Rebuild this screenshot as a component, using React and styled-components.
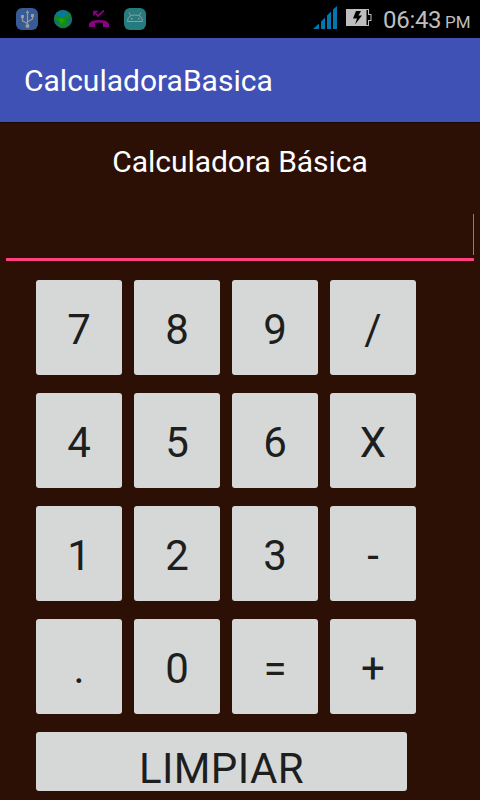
import React from 'react';
import styled, { createGlobalStyle } from 'styled-components';

const GlobalStyle = createGlobalStyle`
  * { box-sizing: border-box; }
  body { margin: 0; background: #2c1005; font-family: Roboto, sans-serif; }
`;

const Screen = styled.div`
  width: 480px;
  height: 800px;
  overflow: hidden;
  display: flex;
  flex-direction: column;
  background: #2c1005;
`;

const StatusBar = styled.header`
  height: 38px;
  flex: none;
  display: flex;
  align-items: center;
  justify-content: space-between;
  padding: 0 9px 0 16px;
  background: #000;
`;

const Notifications = styled.div`
  display: flex;
  align-items: center;
  gap: 15px;
`;

const SystemStatus = styled.div`
  display: flex;
  align-items: flex-start;
  height: 38px;
`;

const Icon = styled.svg`
  display: block;
  flex: none;
  margin-top: ${(p) => p.$top || 0}px;
  margin-right: ${(p) => p.$gap || 0}px;
`;

const Clock = styled.div`
  display: flex;
  align-items: baseline;
  gap: 4px;
  line-height: 38px;
  padding-top: 1px;
  color: #bebebe;
`;

const Time = styled.span`
  width: 58px;
  font-size: 24px;
  letter-spacing: -0.3px;
  white-space: nowrap;
`;

const Meridiem = styled.span`
  width: 26px;
  font-size: 17px;
  white-space: nowrap;
`;

const AppBar = styled.div`
  height: 84px;
  flex: none;
  display: flex;
  align-items: center;
  padding: 0 24px;
  background: #3f51b5;
  color: #fff;
  font-size: 30px;
`;

const Content = styled.main`
  display: flex;
  flex-direction: column;
  box-shadow: inset 0 1px 0 #1b0a03;
`;

const Heading = styled.h1`
  margin: 22px 0 0;
  font-size: 30px;
  font-weight: 400;
  line-height: 36px;
  text-align: center;
  letter-spacing: -0.04px;
  color: #fff;
`;

const Display = styled.div`
  height: 47px;
  margin: 34px 6px 19px;
  display: flex;
  justify-content: flex-end;
  border-bottom: 3px solid #ff4081;
`;

const Caret = styled.span`
  width: 1px;
  height: 41px;
  background: #ff4081;
`;

const Keypad = styled.div`
  display: grid;
  grid-template-columns: repeat(4, 86px);
  grid-auto-rows: 95px;
  gap: 18px 12px;
  padding-left: 36px;
`;

const Key = styled.button`
  border: 0;
  padding: 4px 0 0;
  border-radius: 3px;
  background: #d6d8d7;
  color: #1d1e1e;
  font-family: inherit;
  font-size: 42px;
  line-height: 50px;
`;

const ClearKey = styled(Key)`
  width: 371px;
  height: 59px;
  margin: 18px 0 0 36px;
  padding: 12px 0 0;
  letter-spacing: 0.4px;
`;

const keys = ['7', '8', '9', '/', '4', '5', '6', 'X', '1', '2', '3', '-', '.', '0', '=', '+'];

function UsbIcon() {
  return (
    <Icon width="22" height="22" viewBox="0 0 22 22">
      <rect width="22" height="22" rx="6" fill="#365b95" />
      <path d="M11.5 4V18M11.5 15.5L6.5 13V8M11.5 14L16.5 11V7" stroke="#9c9c9c" strokeWidth="1.2" fill="none" />
      <path d="M11.5 2L13.2 5H9.8ZM5 7H8V10H5ZM15 6H18V9H15Z" fill="#9c9c9c" />
      <circle cx="11.5" cy="18" r="2" fill="#9c9c9c" />
    </Icon>
  );
}

function GlobeIcon() {
  return (
    <Icon width="20" height="20" viewBox="0 0 20 20" $gap={1}>
      <circle cx="10" cy="10" r="9.2" fill="#176f70" />
      <path d="M4 3L11 2L15 4L11 9L6 8L3 6Z" fill="#08799a" />
      <path d="M1.5 6L6 8L9 9L17 4L18 7L13 10L16 16L10 18L4 16L7 13L2 11Z" fill="#148c1a" />
      <path d="M5 10L9 9L12 12L8 15Z" fill="#22a000" />
    </Icon>
  );
}

function MissedCallIcon() {
  return (
    <Icon width="20" height="18" viewBox="0 0 20 18">
      <path d="M5 1.5L9 6L15 0.5M5 5.5V1.5H9" fill="none" stroke="#8c0084" strokeWidth="1.7" />
      <path d="M0 17V14Q1 11 5 10.5Q10 9.5 15 10.5Q19 11 20 14V17H14V13Q10 12 6 13V17Z" fill="#8c0084" />
    </Icon>
  );
}

function AndroidIcon() {
  return (
    <Icon width="22" height="22" viewBox="0 0 22 22">
      <rect width="22" height="22" rx="6" fill="#267b7e" />
      <path d="M3.5 13.5Q3.5 7 11 7T18.5 13.5ZM5 4.5L7 8M17 4.5L15 8" fill="none" stroke="#8f9d9c" strokeWidth="1" />
      <path d="M7 10H8.5V11.5H7ZM14 10H15.5V11.5H14Z" fill="#8f9d9c" />
    </Icon>
  );
}

function SignalIcon() {
  return (
    <Icon width="24" height="23" viewBox="0 0 24 23" $top={6} $gap={9}>
      <path d="M0 23L6 17.5V23ZM8 23V15.5L12 11.5V23ZM14 23V9.5L18 5.5V23ZM20 23V3.5L24 0V23Z" fill="#0077ae" />
    </Icon>
  );
}

function BatteryIcon() {
  return (
    <Icon width="26" height="18" viewBox="0 0 26 18" $top={9} $gap={11}>
      <path d="M0 0H23V5H25.5V12H23V17H0Z" fill="#bebebe" />
      <path d="M20.5 1H22V6H24.5V11H22V16H20.5Z" fill="#000" />
      <path d="M10 2H15L12.5 6.5H16L9 15.5L11 9.5H7Z" fill="#000" />
    </Icon>
  );
}

export default function App() {
  return (
    <Screen>
      <GlobalStyle />
      <StatusBar>
        <Notifications>
          <UsbIcon />
          <GlobeIcon />
          <MissedCallIcon />
          <AndroidIcon />
        </Notifications>
        <SystemStatus>
          <SignalIcon />
          <BatteryIcon />
          <Clock>
            <Time>06:43</Time>
            <Meridiem>PM</Meridiem>
          </Clock>
        </SystemStatus>
      </StatusBar>
      <AppBar>CalculadoraBasica</AppBar>
      <Content>
        <Heading>Calculadora Básica</Heading>
        <Display>
          <Caret />
        </Display>
        <Keypad>
          {keys.map((label) => (
            <Key key={label}>{label}</Key>
          ))}
        </Keypad>
        <ClearKey>LIMPIAR</ClearKey>
      </Content>
    </Screen>
  );
}
